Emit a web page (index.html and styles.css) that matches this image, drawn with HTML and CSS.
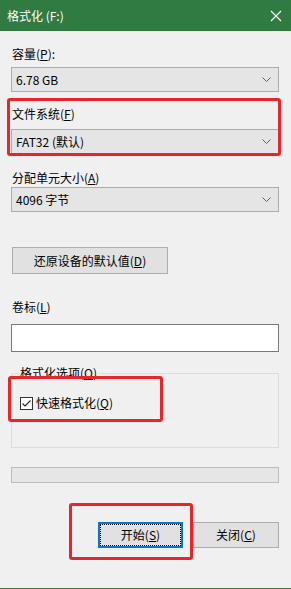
FILE: index.html
```html
<!DOCTYPE html>
<html lang="zh-CN">
<head>
<meta charset="utf-8">
<link rel="stylesheet" href="styles.css">
</head>
<body>
<div class="window">
  <div class="titlebar">
    <span class="title">格式化 (F:)</span>
    <svg class="close" width="12" height="12" viewBox="0 0 12 12"><path d="M1 1 L11 11 M11 1 L1 11" stroke="#fff" stroke-width="1.2" fill="none"/></svg>
  </div>
  <div class="content">
    <div class="label l1">容量(<u>P</u>):</div>
    <div class="combo c1"><span>6.78 GB</span><svg class="chev" width="9" height="5" viewBox="0 0 9 5"><path d="M0.5 0.5 L4.5 4.5 L8.5 0.5" stroke="#606060" fill="none"/></svg></div>
    <div class="label l2">文件系统(<u>F</u>)</div>
    <div class="combo c2"><span>FAT32 (默认)</span><svg class="chev" width="9" height="5" viewBox="0 0 9 5"><path d="M0.5 0.5 L4.5 4.5 L8.5 0.5" stroke="#606060" fill="none"/></svg></div>
    <div class="label l3">分配单元大小(<u>A</u>)</div>
    <div class="combo c3"><span>4096 字节</span><svg class="chev" width="9" height="5" viewBox="0 0 9 5"><path d="M0.5 0.5 L4.5 4.5 L8.5 0.5" stroke="#606060" fill="none"/></svg></div>
    <div class="btn restore">还原设备的默认值(<u>D</u>)</div>
    <div class="label l4">卷标(<u>L</u>)</div>
    <div class="textbox"></div>
    <div class="group">
      <span class="group-title">格式化选项(<u>O</u>)</span>
      <div class="check-row">
        <svg class="checkbox" width="13" height="13" viewBox="0 0 13 13"><rect x="0.5" y="0.5" width="12" height="12" fill="#fff" stroke="#333"/><path d="M2.5 6.5 L5 9 L10.5 3.5" stroke="#222" stroke-width="1.1" fill="none"/></svg>
        <span>快速格式化(<u>Q</u>)</span>
      </div>
    </div>
    <div class="progress"></div>
    <div class="buttons">
      <div class="btn start">开始(<u>S</u>)</div>
      <div class="btn closebtn">关闭(<u>C</u>)</div>
    </div>
  </div>
  <div class="bottom-line"></div>
  <div class="mark m1"></div>
  <div class="mark m2"></div>
  <div class="mark m3"></div>
</div>
</body>
</html>
```
FILE: styles.css
```css
* { box-sizing: border-box; }
html, body { margin: 0; padding: 0; }
body {
  width: 291px;
  height: 589px;
  overflow: hidden;
  background: #f0f0f0;
  font-family: "Noto Sans CJK SC", "Noto Sans", sans-serif;
  font-size: 12px;
  color: #000;
}
u { text-decoration: underline; text-underline-offset: 1px; }
.window {
  position: relative;
  width: 291px;
  height: 589px;
  display: flex;
  flex-direction: column;
}
.titlebar {
  height: 31px;
  background: #2f7b41;
  display: flex;
  align-items: center;
  justify-content: space-between;
  padding: 0 9px 0 7px;
  color: #fff;
  flex: none;
}
.title { font-size: 12px; line-height: 16px; }
.close { display: block; }
.content {
  padding: 0 12px 0 11px;
  display: flex;
  flex-direction: column;
  flex: 1;
}
.label { line-height: 16px; height: 16px; padding-left: 1px; }
.l1 { margin-top: 15px; }
.l2 { margin-top: 14px; }
.l3 { margin-top: 16px; }
.l4 { margin-top: 25px; }
.combo {
  height: 25px;
  background: #e5e5e5;
  border: 1px solid #acacac;
  display: flex;
  align-items: center;
  justify-content: space-between;
  padding: 0 7px 0 4px;
  line-height: 16px;
}
.c1 { margin-top: 5px; }
.c2 { margin-top: 7px; }
.c3 { margin-top: 1px; }
.chev { display: block; }
.btn {
  height: 27px;
  background: #e1e1e1;
  border: 1px solid #adadad;
  display: flex;
  align-items: center;
  justify-content: center;
  line-height: 16px;
}
.restore {
  margin-top: 35px;
  margin-left: 1px;
  width: 156px;
}
.textbox {
  margin-top: 9px;
  height: 28px;
  background: #fff;
  border: 1px solid #7a7a7a;
}
.group {
  margin-top: 21px;
  height: 75px;
  border: 1px solid #dcdcdc;
  padding-left: 8px;
  display: flex;
  flex-direction: column;
  align-items: flex-start;
}
.group-title {
  margin-top: -9px;
  line-height: 16px;
  background: #f0f0f0;
  padding-right: 2px;
}
.check-row {
  margin-top: 14px;
  display: flex;
  align-items: center;
  gap: 3px;
  line-height: 16px;
}
.checkbox { display: block; }
.progress {
  margin-top: 19px;
  height: 16px;
  background: #e6e6e6;
  border: 1px solid #bcbcbc;
}
.buttons {
  margin-top: 39px;
  display: flex;
  justify-content: flex-end;
  gap: 10px;
}
.buttons .btn { height: 26px; }
.start {
  width: 85px;
  border: 2px solid #0078d7;
  outline: 1px dotted #000;
  outline-offset: -3px;
}
.closebtn { width: 86px; }
.bottom-line {
  height: 1px;
  background: #3f7a4c;
  flex: none;
}
.mark {
  position: absolute;
  border: 3px solid #e8262a;
  border-radius: 3px;
}
.m1 { left: 7px; top: 98px; width: 274px; height: 58px; }
.m2 { left: 8px; top: 376px; width: 155px; height: 46px; }
.m3 { left: 69px; top: 503px; width: 124px; height: 57px; }
```
